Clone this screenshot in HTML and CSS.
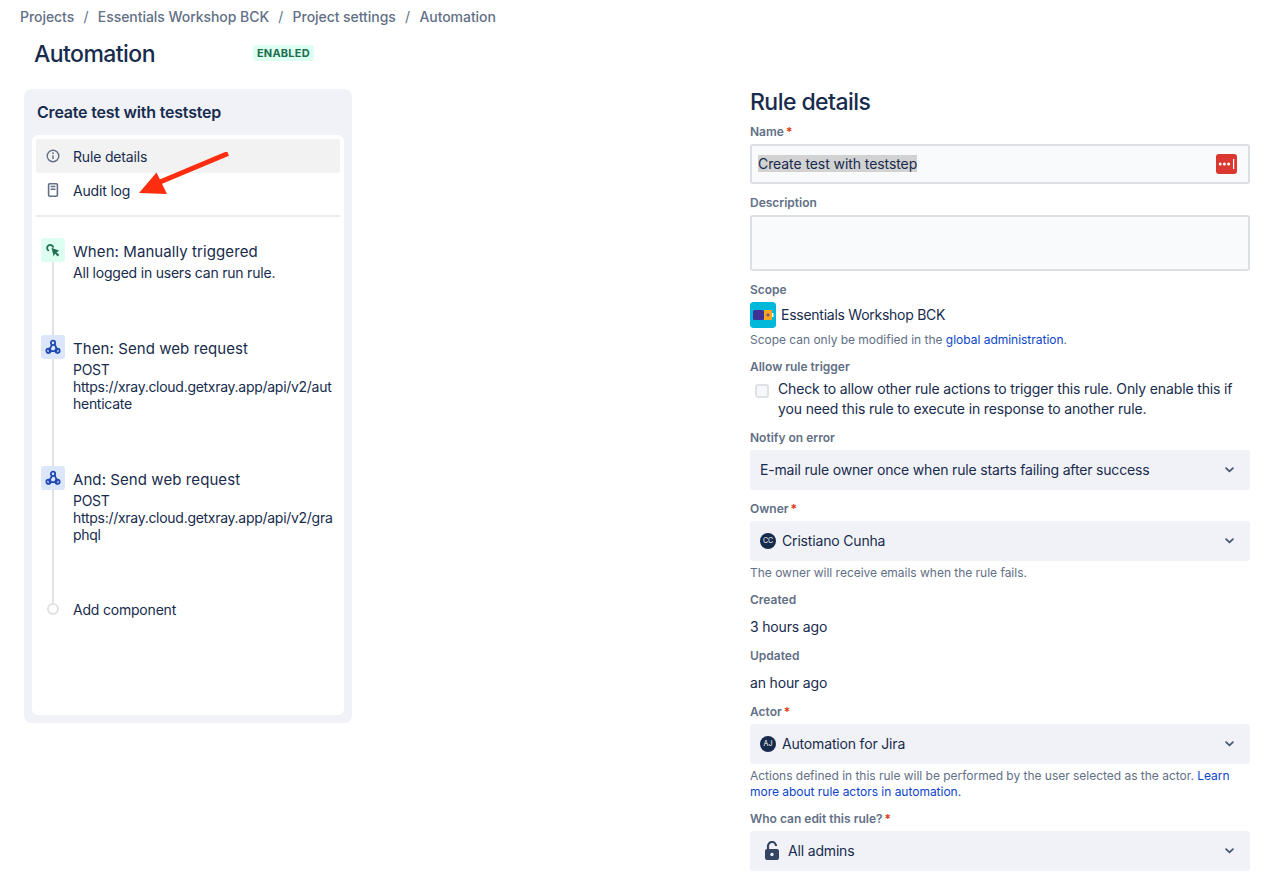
FILE: index.html
```html
<!DOCTYPE html>
<html lang="en">
<head>
<meta charset="utf-8">
<title>Automation</title>
<link rel="stylesheet" href="styles.css">
</head>
<body>
<nav class="crumbs">
  <a>Projects</a><span class="sep">/</span><a>Essentials Workshop BCK</a><span class="sep">/</span><a>Project settings</a><span class="sep">/</span><a>Automation</a>
</nav>
<header class="title-row">
  <h1>Automation</h1>
  <span class="badge">ENABLED</span>
</header>
<main class="columns">
  <aside class="panel">
    <h2>Create test with teststep</h2>
    <div class="card">
      <div class="nav-item selected">
        <svg class="nav-icon" viewBox="0 0 16 16"><circle cx="8" cy="8" r="5.8" fill="none" stroke="#626f86" stroke-width="1.4"/><rect x="7.3" y="7.2" width="1.4" height="3.8" fill="#626f86"/><circle cx="8" cy="5.2" r=".9" fill="#626f86"/></svg>
        <span>Rule details</span>
      </div>
      <div class="nav-item">
        <svg class="nav-icon" viewBox="0 0 16 16"><rect x="3.6" y="1.7" width="8.8" height="12.6" rx="1.2" fill="none" stroke="#626f86" stroke-width="1.6"/><path d="M5.6 4.6h4.8M5.6 7.2h4.8" stroke="#626f86" stroke-width="1.5"/></svg>
        <span>Audit log</span>
      </div>
      <div class="divider"></div>
      <div class="step">
        <div class="rail">
          <div class="step-icon green">
            <svg viewBox="0 0 24 24" width="20" height="20"><path d="M10.2 9.2l9.4 3.8-3.4 1.6 3.3 3.4-1.8 1.7-3.3-3.4-1.6 3.4z" fill="#216e4e"/><path d="M6.3 12.5a3.7 3.7 0 1 1 5.8-4.2" fill="none" stroke="#216e4e" stroke-width="2.1" stroke-linecap="round"/></svg>
          </div>
          <div class="line"></div>
        </div>
        <div class="step-text">
          <div class="step-title">When: Manually triggered</div>
          <div class="step-desc">All logged in users can run rule.</div>
        </div>
      </div>
      <div class="step">
        <div class="rail">
          <div class="step-icon blue">
            <svg viewBox="0 0 24 24" width="20" height="20"><g fill="none" stroke="#1d46b0" stroke-width="2.1"><circle cx="12" cy="7" r="2.6"/><circle cx="6.6" cy="16.6" r="2.6"/><circle cx="17.4" cy="16.6" r="2.6"/><path d="M10.8 9.6l-4 6.6M14 8.8l3.4 7.2M6.8 16.8h10.4"/></g></svg>
          </div>
          <div class="line"></div>
        </div>
        <div class="step-text">
          <div class="step-title">Then: Send web request</div>
          <div class="step-desc url">POST<br>https://xray.cloud.getxray.app/api/v2/authenticate</div>
        </div>
      </div>
      <div class="step">
        <div class="rail">
          <div class="step-icon blue">
            <svg viewBox="0 0 24 24" width="20" height="20"><g fill="none" stroke="#1d46b0" stroke-width="2.1"><circle cx="12" cy="7" r="2.6"/><circle cx="6.6" cy="16.6" r="2.6"/><circle cx="17.4" cy="16.6" r="2.6"/><path d="M10.8 9.6l-4 6.6M14 8.8l3.4 7.2M6.8 16.8h10.4"/></g></svg>
          </div>
          <div class="line"></div>
        </div>
        <div class="step-text">
          <div class="step-title">And: Send web request</div>
          <div class="step-desc url">POST<br>https://xray.cloud.getxray.app/api/v2/graphql</div>
        </div>
      </div>
      <div class="step add">
        <div class="rail">
          <div class="line stub"></div>
          <div class="dot"></div>
        </div>
        <div class="add-text">Add component</div>
      </div>
    </div>
    <svg class="arrow" viewBox="0 0 100 50" width="100" height="50"><path d="M89 1.5L21 30" stroke="#ff2d0f" stroke-width="5" fill="none"/><path d="M0 41L17.5 20.500 28 42z" fill="#ff2d0f"/></svg>
  </aside>

  <section class="details">
    <h2 class="details-title">Rule details</h2>
    <div class="field">
      <label class="label">Name<span class="req">*</span></label>
      <div class="input">
        <span class="selected-text">Create test with teststep</span>
        <svg class="lastpass" viewBox="0 0 21 20" width="21" height="20"><rect width="21" height="20" rx="3" fill="#d9372f"/><circle cx="4.200" cy="10" r="1.5" fill="#fff"/><circle cx="8.400" cy="10" r="1.5" fill="#fff"/><circle cx="12.600" cy="10" r="1.5" fill="#fff"/><rect x="17" y="5" width="1.2" height="10" fill="#fff"/></svg>
      </div>
    </div>
    <div class="field">
      <label class="label">Description</label>
      <div class="input textarea"></div>
    </div>
    <div class="field">
      <label class="label">Scope</label>
      <div class="scope">
        <svg class="scope-icon" viewBox="0 0 26 26" width="26" height="26"><rect width="26" height="26" rx="3" fill="#00b8d9"/><rect x="3" y="8" width="11" height="10" rx="1.5" fill="#403294"/><path d="M14 8h7a1 1 0 0 1 1 1v8a1 1 0 0 1-1 1h-7z" fill="#f6a623"/><rect x="22" y="11" width="1.500" height="4" fill="#fff"/><path d="M16.500 13h3M18 11.500v3" stroke="#403294" stroke-width="1"/></svg>
        <span>Essentials Workshop BCK</span>
      </div>
      <p class="help">Scope can only be modified in the <a class="link">global administration</a>.</p>
    </div>
    <div class="field">
      <label class="label">Allow rule trigger</label>
      <div class="check-row">
        <span class="checkbox"></span>
        <span>Check to allow other rule actions to trigger this rule. Only enable this if you need this rule to execute in response to another rule.</span>
      </div>
    </div>
    <div class="field">
      <label class="label">Notify on error</label>
      <div class="select">
        <span>E-mail rule owner once when rule starts failing after success</span>
        <svg class="chevron" viewBox="0 0 10 6" width="9" height="6"><path d="M1.200 1l3.800 3.600L8.800 1" fill="none" stroke="#44546f" stroke-width="1.9" stroke-linecap="round"/></svg>
      </div>
    </div>
    <div class="field">
      <label class="label">Owner<span class="req">*</span></label>
      <div class="select">
        <span class="avatar">CC</span><span>Cristiano Cunha</span>
        <svg class="chevron" viewBox="0 0 10 6" width="9" height="6"><path d="M1.200 1l3.800 3.600L8.800 1" fill="none" stroke="#44546f" stroke-width="1.9" stroke-linecap="round"/></svg>
      </div>
      <p class="help">The owner will receive emails when the rule fails.</p>
    </div>
    <div class="field">
      <label class="label meta">Created</label>
      <div class="value">3 hours ago</div>
    </div>
    <div class="field">
      <label class="label meta">Updated</label>
      <div class="value">an hour ago</div>
    </div>
    <div class="field">
      <label class="label">Actor<span class="req">*</span></label>
      <div class="select">
        <span class="avatar">AJ</span><span>Automation for Jira</span>
        <svg class="chevron" viewBox="0 0 10 6" width="9" height="6"><path d="M1.200 1l3.800 3.600L8.800 1" fill="none" stroke="#44546f" stroke-width="1.9" stroke-linecap="round"/></svg>
      </div>
      <p class="help">Actions defined in this rule will be performed by the user selected as the actor. <a class="link">Learn more about rule actors in automation.</a></p>
    </div>
    <div class="field">
      <label class="label">Who can edit this rule?<span class="req">*</span></label>
      <div class="select">
        <svg class="lock" viewBox="0 0 14 20" width="14" height="20"><path d="M3 9V5a4 4 0 0 1 8 0" fill="none" stroke="#344563" stroke-width="2.200"/><rect y="8" width="14" height="11" rx="2" fill="#344563"/><circle cx="7" cy="13.500" r="1.700" fill="#f1f2f7"/></svg>
        <span>All admins</span>
        <svg class="chevron" viewBox="0 0 10 6" width="9" height="6"><path d="M1.200 1l3.800 3.600L8.800 1" fill="none" stroke="#44546f" stroke-width="1.900" stroke-linecap="round"/></svg>
      </div>
    </div>
  </section>
</main>
</body>
</html>
```

FILE: styles.css
```css
* { box-sizing: border-box; }
html, body { margin: 0; padding: 0; }
body {
  background: #fff;
  color: #172b4d;
  font-family: Inter, "Liberation Sans", sans-serif;
  font-size: 14px;
  line-height: 20px;
  letter-spacing: -0.17px;
  overflow: hidden;
  height: 895px;
}
.crumbs {
  display: flex;
  align-items: center;
  height: 34px;
  padding-left: 20px;
  color: #626f86;
  font-weight: 500;
  letter-spacing: -0.05px;
}
.sep { margin: 0 9.300px; font-weight: 400; }
.title-row {
  display: flex;
  align-items: center;
  height: 40px;
  padding-left: 34px;
}
h1 {
  margin: 0;
  font-size: 23px;
  line-height: 28px;
  font-weight: 500;
  letter-spacing: -0.55px;
}
.badge {
  margin-left: 98px;
  margin-top: -2px;
  padding: 0 4px;
  height: 16px;
  line-height: 16px;
  border-radius: 3px;
  background: #dcfff1;
  color: #216e4e;
  font-size: 11px;
  font-weight: 700;
  letter-spacing: .2px;
}
.columns {
  position: relative;
  display: flex;
  justify-content: space-between;
  align-items: flex-start;
  margin-top: 14px;
  padding: 0 26px 0 24px;
}
.panel {
  position: relative;
  width: 328px;
  height: 634px;
  margin-top: 1px;
  padding: 0 8px;
  background: #f1f2f7;
  border-radius: 8px;
}
.panel h2 {
  margin: 0;
  padding-left: 5px;
  height: 46px;
  font-size: 16px;
  line-height: 46px;
  font-weight: 600;
  letter-spacing: -0.2px;
}
.card {
  height: 580px;
  padding: 4px 4px 0;
  background: #fff;
  border-radius: 6px;
}
.nav-item {
  display: flex;
  align-items: center;
  height: 34px;
  padding: 2px 0 0 9px;
  border-radius: 3px;
}
.nav-item.selected { background: #f2f2f3; }
.nav-icon { width: 16px; height: 16px; margin: -2px 12px 0 0; }
.divider {
  height: 2px;
  margin: 8px 0 21px;
  background: #ebecf0;
}
.step {
  display: flex;
  gap: 8px;
  padding-left: 5px;
  padding-right: 5px;
}
.rail {
  flex: 0 0 24px;
  display: flex;
  flex-direction: column;
  align-items: center;
}
.line { flex: 1; width: 2px; background: #dfe1e6; }
.line.stub { flex: 0 0 6px; }
.step-icon {
  flex: 0 0 24px;
  width: 24px;
  display: flex;
  align-items: center;
  justify-content: center;
  border-radius: 3px;
}
.green { background: #dcfff1; }
.blue { background: #dbe6fb; }
.step-text { flex: 1; min-width: 0; padding: 4px 0 54px; }
.step-title { font-size: 15px; line-height: 20px; letter-spacing: 0.08px; }
.step-desc {
  margin-top: 2px;
  line-height: 17px;
  letter-spacing: -0.21px;
  word-break: break-all;
}
.step-desc.url { letter-spacing: -0.28px; }
.dot {
  width: 12px;
  height: 12px;
  border: 2px solid #dfe1e6;
  border-radius: 50%;
  background: #fff;
}
.add-text { padding-top: 3px; letter-spacing: -0.2px; }
.arrow { position: absolute; left: 115px; top: 63px; }

.details { width: 500px; display: flex; flex-direction: column; gap: 10px; }
.details-title {
  margin: 0 0 -3px;
  font-size: 23px;
  line-height: 28px;
  font-weight: 500;
  letter-spacing: -0.55px;
}
.label {
  display: block;
  padding-top: 1px;
  margin-bottom: 4px;
  color: #626f86;
  font-size: 12px;
  line-height: 16px;
  font-weight: 600;
  letter-spacing: 0;
}
.label.meta { margin-bottom: 9px; }
.req { color: #de350b; margin-left: 2px; }
.input {
  display: flex;
  align-items: center;
  justify-content: space-between;
  height: 40px;
  padding: 0 11px 0 6px;
  background: #f9fafb;
  border: 2px solid #dcdfe4;
  border-radius: 3px;
}
.textarea { height: 56px; }
.selected-text {
  margin-top: -2px;
  background: #d2d2d2;
  line-height: 17px;
  letter-spacing: -0.08px;
}
.scope { display: flex; align-items: center; gap: 5px; height: 26px; letter-spacing: -0.26px; }
.scope-icon { border-radius: 3px; }
.help {
  margin: 4px 0 0;
  color: #626f86;
  font-size: 12px;
  line-height: 16px;
  letter-spacing: -0.02px;
}
.link { color: #0c45c9; }
.check-row { display: flex; letter-spacing: -0.14px; }
.checkbox {
  flex: 0 0 14px;
  width: 14px;
  height: 14px;
  margin: 5px 9px 0 5px;
  border: 2px solid #dfe1e6;
  border-radius: 3px;
  background: #f7f8f9;
}
.select {
  display: flex;
  align-items: center;
  height: 40px;
  padding: 0 16px 0 10px;
  background: #f1f2f7;
  border-radius: 3px;
}
.avatar {
  flex: 0 0 16px;
  width: 16px;
  height: 16px;
  margin-right: 6px;
  border-radius: 50%;
  background: #172b4d;
  color: #fff;
  font-size: 7px;
  line-height: 16px;
  letter-spacing: 0;
  text-align: center;
}
.lock { margin: 0 9px 0 5px; }
.chevron { margin-left: auto; }
```
